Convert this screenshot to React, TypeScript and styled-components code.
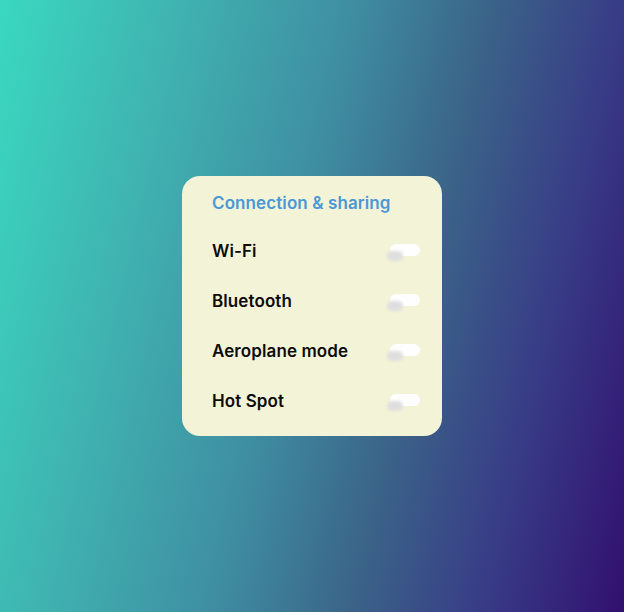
import styled, { createGlobalStyle } from 'styled-components';

const GlobalStyle = createGlobalStyle`
  html, body {
    margin: 0;
    padding: 0;
  }
  body {
    font-family: Inter, 'Noto Sans', sans-serif;
  }
`;

const Page = styled.div`
  width: 624px;
  height: 612px;
  display: flex;
  align-items: center;
  justify-content: center;
  background: linear-gradient(
    103deg,
    #3ad8c0 0%,
    #40b2b0 24%,
    #3f8ea2 46%,
    #3b6488 64%,
    #383a86 82%,
    #31106e 100%
  );
`;

const Card = styled.div`
  width: 260px;
  height: 260px;
  box-sizing: border-box;
  padding: 15px 22px 10px 30px;
  border-radius: 18px;
  background: #f3f3d8;
  display: flex;
  flex-direction: column;
`;

const Title = styled.h2`
  margin: 0 0 11px;
  height: 24px;
  line-height: 24px;
  font-size: 17px;
  font-weight: 600;
  color: #4a98d6;
  letter-spacing: 0.1px;
`;

const Row = styled.div`
  height: 50px;
  display: flex;
  align-items: center;
  justify-content: space-between;
`;

const Label = styled.span`
  font-size: 17px;
  font-weight: 600;
  color: #0c0c0c;
  letter-spacing: 0.1px;
`;

const Switch = styled.div`
  position: relative;
  width: 30px;
  height: 12px;
  margin-top: -2px;
  border-radius: 6px;
  background: #fefefe;
`;

const Knob = styled.div`
  position: absolute;
  left: -3px;
  top: 7px;
  width: 16px;
  height: 10px;
  border-radius: 5px;
  background: #dedede;
  filter: blur(1.5px);
`;

const items = ['Wi-Fi', 'Bluetooth', 'Aeroplane mode', 'Hot Spot'];

export default function App() {
  return (
    <>
      <GlobalStyle />
      <Page>
        <Card>
          <Title>Connection &amp; sharing</Title>
          {items.map((name) => (
            <Row key={name}>
              <Label>{name}</Label>
              <Switch>
                <Knob />
              </Switch>
            </Row>
          ))}
        </Card>
      </Page>
    </>
  );
}
